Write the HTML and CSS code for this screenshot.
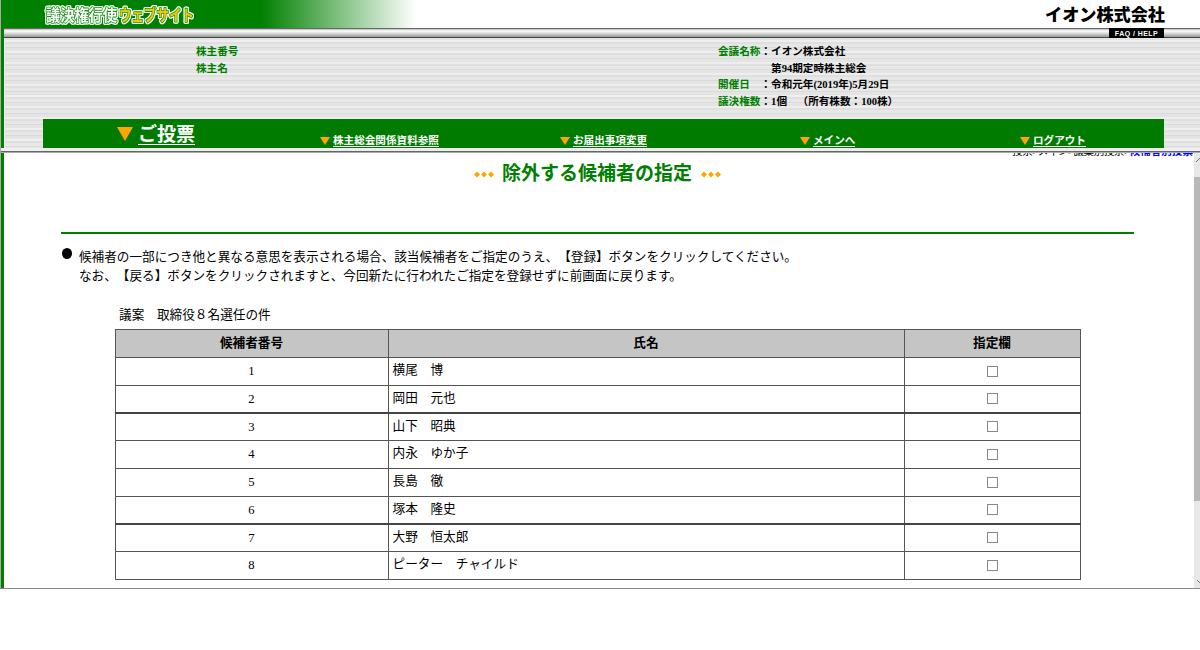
FILE: index.html
```html
<!DOCTYPE html>
<html lang="ja">
<head>
<meta charset="utf-8">
<title>議決権行使ウェブサイト</title>
<link rel="stylesheet" href="styles.css">
</head>
<body>
<div class="frame">
<header class="header">
  <div class="brand">
    <svg class="logo" width="160" height="28" viewBox="0 0 160 28">
      <text x="4" y="20.5" textLength="71" lengthAdjust="spacingAndGlyphs">議決権行使</text>
      <text class="logo-web" x="77" y="20.5" textLength="75" lengthAdjust="spacingAndGlyphs">ウェブサイト</text>
    </svg>
    <svg class="company" width="122" height="28" viewBox="0 0 122 28"><text x="1" y="20.5" textLength="120" lengthAdjust="spacingAndGlyphs">イオン株式会社</text></svg>
  </div>
  <div class="rail"><a class="faq">FAQ / HELP</a></div>
  <div class="info">
    <div class="holder"><div>株主番号</div><div>株主名</div></div>
    <dl class="meeting">
      <dt>会議名称</dt><dd>：</dd><dd>イオン株式会社</dd>
      <dt></dt><dd></dd><dd>第94期定時株主総会</dd>
      <dt>開催日</dt><dd>：</dd><dd>令和元年(2019年)5月29日</dd>
      <dt>議決権数</dt><dd>：</dd><dd>1個　（所有株数：100株）</dd>
    </dl>
  </div>
  <nav class="nav">
    <div class="item main"><svg width="16" height="14" viewBox="0 0 16 14"><path d="M0 0H16L8 14Z"/></svg><a>ご投票</a></div>
    <div class="item"><svg width="10" height="8" viewBox="0 0 10 8"><path d="M0 0H10L5 8Z"/></svg><a>株主総会関係資料参照</a></div>
    <div class="item"><svg width="10" height="8" viewBox="0 0 10 8"><path d="M0 0H10L5 8Z"/></svg><a>お届出事項変更</a></div>
    <div class="item"><svg width="10" height="8" viewBox="0 0 10 8"><path d="M0 0H10L5 8Z"/></svg><a>メインへ</a></div>
    <div class="item"><svg width="10" height="8" viewBox="0 0 10 8"><path d="M0 0H10L5 8Z"/></svg><a>ログアウト</a></div>
  </nav>
</header>
<div class="split"></div>
<div class="body">
  <main class="content">
    <div class="crumbs"><div><span>投票&gt;メイン&gt;議案別投票&gt;</span><b>候補者別投票</b></div></div>
    <h1 class="title">
      <svg width="20" height="7" viewBox="0 0 20 7"><path d="M0 3.5L3 .5L6 3.5L3 6.5ZM7 3.5L10 .5L13 3.5L10 6.5ZM14 3.5L17 .5L20 3.5L17 6.5Z"/></svg>
      <span>除外する候補者の指定</span>
      <svg width="20" height="7" viewBox="0 0 20 7"><path d="M0 3.5L3 .5L6 3.5L3 6.5ZM7 3.5L10 .5L13 3.5L10 6.5ZM14 3.5L17 .5L20 3.5L17 6.5Z"/></svg>
    </h1>
    <div class="rule"></div>
    <div class="note"><i class="dot"></i><p>候補者の一部につき他と異なる意思を表示される場合、該当候補者をご指定のうえ、【登録】ボタンをクリックしてください。<br>なお、【戻る】ボタンをクリックされますと、今回新たに行われたご指定を登録せずに前画面に戻ります。</p></div>
    <div class="agenda">議案　取締役８名選任の件</div>
    <table class="list">
      <colgroup><col class="c-no"><col class="c-name"><col class="c-pick"></colgroup>
      <thead><tr><th>候補者番号</th><th>氏名</th><th>指定欄</th></tr></thead>
      <tbody>
        <tr><td>1</td><td>横尾　博</td><td><input type="checkbox"></td></tr>
        <tr class="thick"><td>2</td><td>岡田　元也</td><td><input type="checkbox"></td></tr>
        <tr><td>3</td><td>山下　昭典</td><td><input type="checkbox"></td></tr>
        <tr><td>4</td><td>内永　ゆか子</td><td><input type="checkbox"></td></tr>
        <tr><td>5</td><td>長島　徹</td><td><input type="checkbox"></td></tr>
        <tr class="thick"><td>6</td><td>塚本　隆史</td><td><input type="checkbox"></td></tr>
        <tr><td>7</td><td>大野　恒太郎</td><td><input type="checkbox"></td></tr>
        <tr><td>8</td><td>ピーター　チャイルド</td><td><input type="checkbox"></td></tr>
      </tbody>
    </table>
  </main>
  <div class="scroll">
    <svg width="6" height="24" viewBox="0 0 6 24"><path d="M2 9L7 4L12 9"/></svg>
    <div class="thumb"></div>
    <svg class="down" width="6" height="10" viewBox="0 0 6 10"><path d="M3 2L7 6L11 2"/></svg>
  </div>
</div>
</div>
</body>
</html>
```
FILE: styles.css
```css
* { box-sizing: border-box; }
body { margin: 0; background: #fff; color: #000; font-family: "Liberation Serif", "Noto Sans CJK JP", serif; text-spacing-trim: space-all; overflow: hidden; }
.frame { width: 1200px; height: 589px; padding-left: 1px; border-bottom: 1px solid #888; box-shadow: 0 1px 0 #ddd; background: linear-gradient(90deg, #aaa 1px, #fff 1px); }
.header { height: 148px; border-left: 3px solid green; display: flex; flex-direction: column; background: linear-gradient(90deg, #eee 1px, transparent 1px), repeating-linear-gradient(180deg, #e7e7e8 0 3px, #dadada 3px 4px, #e4e4e4 4px 7px, #eeeeef 7px 9px, #dfdfdf 9px 11px); }
.brand { height: 28px; flex: none; margin-left: -3px; padding: 0 34px 0 41px; display: flex; justify-content: space-between; background: linear-gradient(90deg, green 260px, #fff 415px); }
.logo { font: 700 16px "Noto Sans CJK JP", sans-serif; overflow: visible; fill: #fff; stroke: #1c8a1c; stroke-width: 1.6px; stroke-linejoin: round; paint-order: stroke; filter: drop-shadow(1px 0 0 #eaffea) drop-shadow(-1px 0 0 #eaffea) drop-shadow(0 1px 0 #eaffea) drop-shadow(0 -1px 0 #eaffea); }
.logo-web { fill: #f4c800; }
.company { font: 900 17.5px "Noto Sans CJK JP", sans-serif; }
.rail { height: 10px; flex: none; padding-right: 36px; display: flex; justify-content: flex-end; border-top: 1px solid #666; border-bottom: 1px solid #444; background: linear-gradient(180deg, #bbb 0, #fff 2px, #ddd 4px, #999 8px); }
.faq { width: 55px; height: 10px; margin-top: -1px; background: #000; color: #fff; font: bold 7px/11px "Liberation Sans", sans-serif; letter-spacing: .45px; text-align: center; white-space: nowrap; }
.info { height: 81px; flex: none; display: grid; grid-template-columns: 522px auto; padding: 6px 0 0 192px; font-size: 10.6px; font-weight: bold; line-height: 16.6px; }
.holder { color: green; line-height: 17px; margin-top: -1px; }
.meeting { margin: 0; display: grid; grid-template-columns: 42.5px 10.6px auto; grid-auto-rows: 16.6px; align-content: start; white-space: nowrap; }
.meeting dt { color: green; }
.meeting dd { margin: 0; }
.nav { height: 29px; flex: none; margin: 0 36px 0 39px; padding-left: 74px; background: #007b00; display: grid; grid-template-columns: 203px 240px 240px 220px auto; font: bold 10.6px/14px "Noto Sans CJK JP", sans-serif; }
.item { display: flex; gap: 3px; align-items: center; height: 14px; margin-top: 15px; color: #fff; white-space: nowrap; }
.item svg, .title svg { fill: #ffa500; flex: none; }
.item a { border-bottom: 1px solid #fff; line-height: 10px; height: 12px; }
.main { gap: 5px; font-size: 19px; height: 24px; margin-top: 2px; }
.main a { line-height: 22px; height: 23px; }
.main svg { margin-top: 2px; }
.split { height: 5px; background: linear-gradient(180deg, #e8f4e8 0 1px, #eee 1px 3px, #666 3px 4px, #aaa 4px 5px); }
.body { height: 435px; display: flex; border-left: 3px solid green; }
.content { width: 1190px; height: 435px; overflow: hidden; display: flex; flex-direction: column; }
.crumbs { height: 4px; overflow: hidden; flex: none; display: flex; align-items: flex-end; justify-content: flex-end; padding-right: 1px; font-size: 10.6px; line-height: 12px; white-space: nowrap; }
.crumbs div { flex: none; margin-bottom: -1px; }
.crumbs span { letter-spacing: -.5px; }
.crumbs b { color: #00f; }
.title { height: 32px; flex: none; margin: -1px 0 1px; padding-left: 470px; display: flex; align-items: center; font: bold 19px/32px "Noto Sans CJK JP", sans-serif; color: green; }
.title span { width: 190px; margin: 0 9px 0 8px; white-space: nowrap; }
.title svg { margin-top: 4px; }
.rule { height: 2px; width: 1073px; flex: none; background: green; margin: 43px 0 0 57px; }
.note { display: flex; flex: none; height: 38px; margin: 12px 0 0 58px; }
.dot { width: 10px; height: 11px; margin: 2px 7px 0 0; border-radius: 50%; background: #000; }
.note p { margin: 0; font: 12.62px/19px "Noto Sans CJK JP", sans-serif; white-space: nowrap; }
.agenda { flex: none; height: 19px; margin: 20px 0 0 115px; font: 12.65px/19px "Noto Sans CJK JP", sans-serif; }
.list { width: 966px; margin: 6px 0 0 110.5px; flex: none; table-layout: fixed; border-collapse: collapse; font-size: 12.65px; line-height: 18px; }
.c-no { width: 273px; }
.c-name { width: 516px; }
.c-pick { width: 176px; }
.list th, .list td { height: 27.75px; padding: 0; border: 1px solid #555; text-align: center; }
.list th { background: #c5c5c5; }
.list .thick td { border-bottom: 2px solid #444; }
.list td:nth-child(2) { text-align: left; padding: 0 0 2px 4px; }
.list input { appearance: none; display: block; width: 11px; height: 11px; margin: 0 auto; border: 1px solid #888; background: #fff; }
.scroll { width: 6px; height: 435px; background: #e8e8e8; display: flex; flex-direction: column; }
.scroll svg { fill: none; stroke: #777; flex: none; }
.scroll .down { margin-top: auto; }
.thumb { height: 324px; background: #b8b8b8; }
```
